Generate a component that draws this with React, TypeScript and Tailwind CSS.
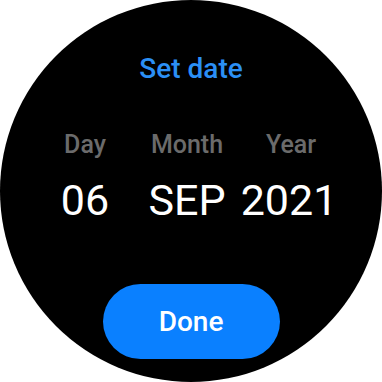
import React from "react";

export default function App() {
  const font = { fontFamily: "Roboto, 'Noto Sans', sans-serif" };
  return (
    <div className="w-[382px] h-[382px] bg-white" style={font}>
      <div className="w-[382px] h-[382px] rounded-full bg-black flex flex-col items-center pt-[55px]">
        <div className="text-[28px] leading-[28px] font-medium text-[#2b8ff5]">Set date</div>
        <div className="w-full flex pl-[34px] mt-[49px] text-[25px] leading-[25px] font-medium text-[#6b6b6b]">
          <div className="w-[102px] text-center">Day</div>
          <div className="w-[102px] text-center">Month</div>
          <div className="w-[106px] text-center">Year</div>
        </div>
        <div className="w-full flex pl-[34px] mt-[22px] text-[43px] leading-[43px] font-normal text-white">
          <div className="w-[102px] text-center">06</div>
          <div className="w-[102px] text-center">SEP</div>
          <div className="w-[102px] text-center">2021</div>
        </div>
        <button className="mt-[62px] w-[177px] h-[75px] rounded-full bg-[#0a80ff] text-white text-[28px] leading-[28px] font-medium flex items-center justify-center">
          Done
        </button>
      </div>
    </div>
  );
}
